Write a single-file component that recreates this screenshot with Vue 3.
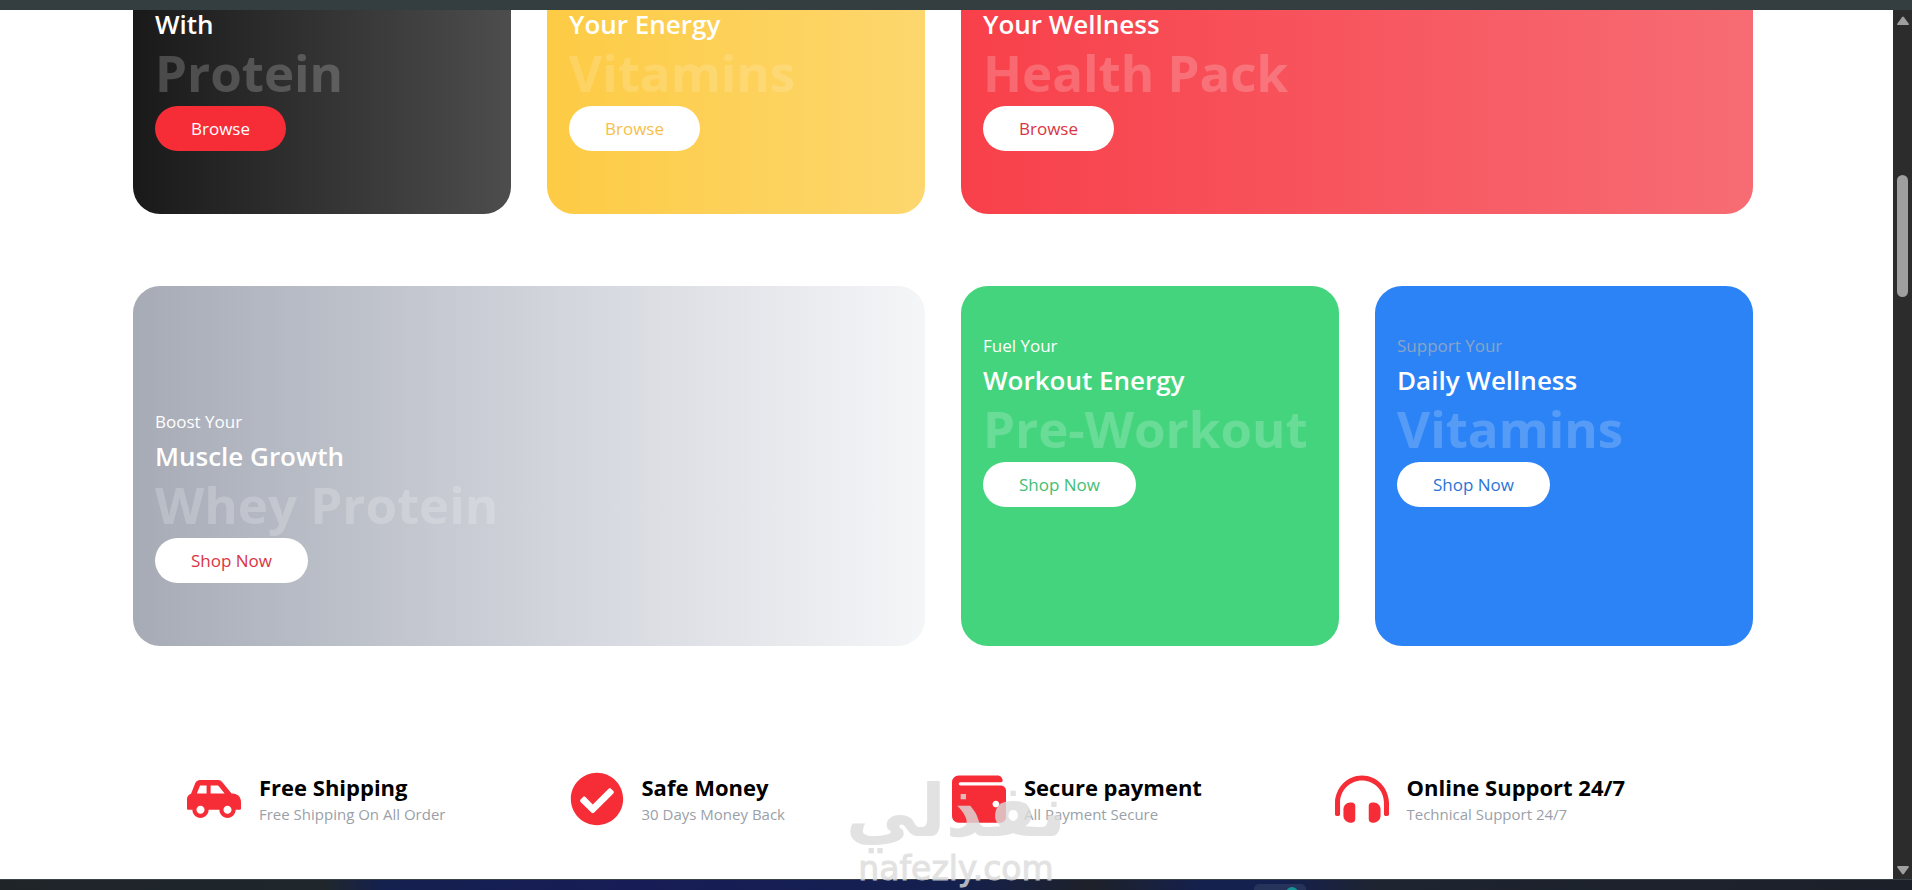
<template>
  <div class="screen">
    <div class="top-strip"></div>

    <div class="browser">
      <main class="page">
        <section class="banners">
          <article
            v-for="banner in banners"
            :key="banner.id"
            :class="['banner', banner.theme, { wide: banner.wide, cut: banner.cut, bottom: banner.bottom }]"
          >
            <p v-if="banner.intro" class="banner-intro">{{ banner.intro }}</p>
            <h2 class="banner-title">{{ banner.title }}</h2>
            <p class="banner-name">{{ banner.name }}</p>
            <button type="button" class="banner-button">{{ banner.action }}</button>
          </article>
        </section>

        <section class="services">
          <div v-for="service in services" :key="service.title" class="service">
            <svg class="service-icon" :viewBox="service.viewBox" aria-hidden="true">
              <path :d="service.path" />
            </svg>
            <div>
              <h3 class="service-title">{{ service.title }}</h3>
              <p class="service-text">{{ service.text }}</p>
            </div>
          </div>
        </section>
      </main>

      <div class="scrollbar">
        <svg class="arrow" viewBox="0 0 12 10" aria-hidden="true">
          <path d="M5 1.2Q6 0 7 1.2L11.6 7.6Q12.4 9 11 9H1Q-.4 9 .4 7.6Z" />
        </svg>
        <div class="thumb"></div>
        <svg class="arrow down" viewBox="0 0 12 10" aria-hidden="true">
          <path d="M5 1.2Q6 0 7 1.2L11.6 7.6Q12.4 9 11 9H1Q-.4 9 .4 7.6Z" />
        </svg>
      </div>
    </div>

    <div class="taskbar">
      <span class="task-app"><span class="task-dot"></span></span>
    </div>

    <div class="watermark">
      <span class="watermark-ar" lang="ar" dir="rtl">نفذلي</span>
      <span class="watermark-en">nafezly.com</span>
    </div>
  </div>
</template>

<script setup>
const banners = [
  { id: 1, title: 'With', name: 'Protein', action: 'Browse', theme: 'black', cut: true, bottom: true },
  { id: 2, title: 'Your Energy', name: 'Vitamins', action: 'Browse', theme: 'yellow', cut: true, bottom: true },
  { id: 3, title: 'Your Wellness', name: 'Health Pack', action: 'Browse', theme: 'red', wide: true, cut: true, bottom: true },
  { id: 4, intro: 'Boost Your', title: 'Muscle Growth', name: 'Whey Protein', action: 'Shop Now', theme: 'gray', wide: true, bottom: true },
  { id: 5, intro: 'Fuel Your', title: 'Workout Energy', name: 'Pre-Workout', action: 'Shop Now', theme: 'green' },
  { id: 6, intro: 'Support Your', title: 'Daily Wellness', name: 'Vitamins', action: 'Shop Now', theme: 'blue' }
]

const services = [
  {
    title: 'Free Shipping',
    text: 'Free Shipping On All Order',
    viewBox: '0 0 640 512',
    path: 'M544 192h-16L419.22 56.02A64.025 64.025 0 0 0 369.24 32H155.33c-26.17 0-49.7 15.93-59.42 40.23L48 194.26C20.44 201.4 0 226.21 0 256v112c0 8.84 7.16 16 16 16h48c0 53.02 42.98 96 96 96s96-42.98 96-96h128c0 53.02 42.98 96 96 96s96-42.98 96-96h48c8.84 0 16-7.16 16-16v-80c0-53.02-42.98-96-96-96zM160 432c-26.47 0-48-21.53-48-48s21.53-48 48-48 48 21.53 48 48-21.53 48-48 48zm72-240H116.93l38.4-96H232v96zm48 0V96h89.24l76.8 96H280zm200 240c-26.47 0-48-21.53-48-48s21.53-48 48-48 48 21.53 48 48-21.53 48-48 48z'
  },
  {
    title: 'Safe Money',
    text: '30 Days Money Back',
    viewBox: '0 0 512 512',
    path: 'M504 256c0 136.967-111.033 248-248 248S8 392.967 8 256 119.033 8 256 8s248 111.033 248 248zM227.314 387.314l184-184c6.248-6.248 6.248-16.379 0-22.627l-22.627-22.627c-6.248-6.249-16.379-6.249-22.628 0L216 308.118l-70.059-70.059c-6.248-6.248-16.379-6.248-22.628 0l-22.627 22.627c-6.248 6.248-6.248 16.379 0 22.627l104 104c6.249 6.249 16.379 6.249 22.628.001z'
  },
  {
    title: 'Secure payment',
    text: 'All Payment Secure',
    viewBox: '0 0 512 512',
    path: 'M461.2 128H80c-8.84 0-16-7.16-16-16s7.16-16 16-16h384c8.84 0 16-7.16 16-16 0-26.51-21.49-48-48-48H64C28.65 32 0 60.65 0 96v320c0 35.35 28.65 64 64 64h397.2c28.02 0 50.8-21.53 50.8-48V176c0-26.47-22.78-48-50.8-48zM416 336c-17.67 0-32-14.33-32-32s14.33-32 32-32 32 14.33 32 32-14.33 32-32 32z'
  },
  {
    title: 'Online Support 24/7',
    text: 'Technical Support 24/7',
    viewBox: '0 0 512 512',
    path: 'M160 288h-16c-35.35 0-64 28.7-64 64.12v63.76c0 35.41 28.65 64.12 64 64.12h16c17.67 0 32-14.36 32-32.06V320.06c0-17.71-14.33-32.06-32-32.06zm208 0h-16c-17.67 0-32 14.35-32 32.06v127.88c0 17.7 14.33 32.06 32 32.06h16c35.35 0 64-28.71 64-64.12v-63.76c0-35.41-28.65-64.12-64-64.12zM256 32C112.91 32 4.57 151.13 0 288v112c0 8.84 7.16 16 16 16h16c8.84 0 16-7.16 16-16V288c0-114.67 93.33-207.8 208-207.82 114.67.02 208 93.15 208 207.82v112c0 8.84 7.16 16 16 16h16c8.84 0 16-7.16 16-16V288C507.43 151.13 399.09 32 256 32z'
  }
]
</script>

<style>
body {
  background: #ffffff;
}
</style>

<style scoped>
.screen {
  position: relative;
  display: flex;
  flex-direction: column;
  height: 100vh;
  overflow: hidden;
  font-family: 'Segoe UI', 'Open Sans', 'Noto Sans', sans-serif;
}

.top-strip {
  height: 10px;
  flex-shrink: 0;
  background: #343d3f;
}

.browser {
  display: flex;
  flex: 1;
  min-height: 0;
}

.page {
  flex: 1;
  overflow: hidden;
  padding: 0 140px 0 133px;
  background: #ffffff;
}

/* Banners */
.banners {
  display: grid;
  grid-template-columns: repeat(4, 1fr);
  column-gap: 36px;
  row-gap: 72px;
}

.banner {
  display: flex;
  flex-direction: column;
  align-items: flex-start;
  box-sizing: border-box;
  min-width: 0;
  height: 360px;
  padding: 46px 22px 63px;
  border-radius: 27px;
  color: #ffffff;
  white-space: nowrap;
}

.banner.wide {
  grid-column: span 2;
}

.banner.bottom {
  justify-content: flex-end;
}

.banner.cut {
  height: 204px;
  padding-top: 0;
  border-radius: 0 0 27px 27px;
}

.banner-intro {
  margin: 0 0 2px;
  font-size: 17px;
  line-height: 28px;
}

.banner-title {
  margin: 0;
  font-size: 26px;
  font-weight: 600;
  line-height: 36px;
}

.banner-name {
  margin: 0 0 4px;
  font-size: 51px;
  font-weight: 700;
  line-height: 60px;
  opacity: 0.2;
}

.banner-button {
  flex-shrink: 0;
  height: 45px;
  padding: 0 36px;
  border: none;
  border-radius: 23px;
  background: #ffffff;
  font-family: inherit;
  font-size: 17px;
  line-height: 27px;
  cursor: pointer;
}

.black {
  background: linear-gradient(to right, #191919, #4d4d4d);
}

.black .banner-button {
  background: #f62d37;
  color: #ffffff;
}

.yellow {
  background: linear-gradient(to right, #fdcb44, #fdd76e);
}

.yellow .banner-name {
  opacity: 0.15;
}

.yellow .banner-button {
  color: #f8c04a;
}

.red {
  background: linear-gradient(to right, #f8404a, #f76c74);
}

.red .banner-button,
.gray .banner-button {
  color: #d93442;
}

.gray {
  background: linear-gradient(to right, #a6abb6, #d3d6dd 55%, #f5f6f8);
}

.green {
  background: #44d47d;
}

.green .banner-button {
  color: #44c074;
}

.blue {
  background: #2b83f6;
}

.blue .banner-intro {
  color: #8ba3c7;
}

.blue .banner-button {
  color: #2b74d6;
}

/* Services */
.services {
  display: grid;
  grid-template-columns: repeat(4, 1fr);
  margin-top: 126px;
  padding: 0 36px 0 54px;
}

.service {
  display: flex;
  align-items: center;
  gap: 18px;
  white-space: nowrap;
}

.service-icon {
  width: 54px;
  height: 54px;
  flex-shrink: 0;
  fill: #f62d37;
}

.service-title {
  margin: 0;
  color: #000000;
  font-size: 22px;
  font-weight: 700;
  line-height: 30px;
}

.service-text {
  margin: 0;
  color: #9a9fa9;
  font-size: 15px;
  line-height: 24px;
}

/* Scrollbar */
.scrollbar {
  display: flex;
  flex-direction: column;
  align-items: center;
  box-sizing: border-box;
  width: 19px;
  flex-shrink: 0;
  padding: 6px 0 4px;
  background: #2c2c2c;
}

.arrow {
  width: 12px;
  height: 10px;
  fill: #9f9f9f;
}

.arrow.down {
  margin-top: auto;
  transform: rotate(180deg);
}

.thumb {
  width: 11px;
  height: 122px;
  margin-top: 149px;
  border-radius: 6px;
  background: #9f9f9f;
}

/* Taskbar */
.taskbar {
  display: flex;
  justify-content: flex-end;
  box-sizing: border-box;
  height: 11px;
  flex-shrink: 0;
  overflow: hidden;
  padding: 4px 606px 0 0;
  border-top: 1px solid #3b414a;
  background: linear-gradient(to right, #1f2429 0, #1f272c 17%, #14204e 20%, #171c56 33%, #14204e 50%, #1e2129 57%, #14204e 63%, #14204e 67%, #1e2430 72%, #1c2029 100%);
}

.task-app {
  display: flex;
  justify-content: flex-end;
  width: 52px;
  height: 40px;
  border-radius: 5px;
  background: #26345c;
}

.task-dot {
  width: 12px;
  height: 12px;
  margin: 3px 8px 0 0;
  border-radius: 50%;
  background: #149394;
}

/* Watermark */
.watermark {
  position: absolute;
  bottom: 0;
  left: 50%;
  display: flex;
  flex-direction: column;
  align-items: center;
  transform: translateX(-50%);
  color: #dcdcdc;
  opacity: 0.8;
  font-family: 'DejaVu Sans', sans-serif;
  pointer-events: none;
}

.watermark-ar {
  font-size: 72px;
  font-weight: 700;
  line-height: 72px;
}

.watermark-en {
  font-size: 33px;
  line-height: 43px;
  -webkit-text-stroke: 1px #dcdcdc;
}
</style>
